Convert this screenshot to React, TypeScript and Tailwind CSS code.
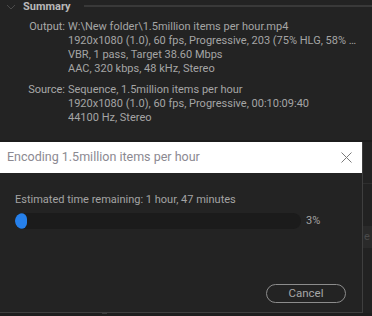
const font = { fontFamily: 'Roboto, "Noto Sans", sans-serif' };

const SummaryRow: React.FC<{ label: string; lines: string[] }> = ({ label, lines }) => {
  return (
    <div className="flex">
      <div className="w-[65px] shrink-0 text-right text-[#a9a9a9]">{label}</div>
      <div className="min-w-0 flex-1 pl-[3px] text-[#a5a5a5]">
        {lines.map((l) => (
          <div key={l} className="truncate">{l}</div>
        ))}
      </div>
    </div>
  );
};

const App: React.FC = () => {
  return (
    <div style={font} className="w-[372px] h-[316px] bg-[#1e1e1e] overflow-hidden flex flex-col">
      {/* summary panel */}
      <section className="h-[140px] shrink-0 bg-[#232323] pr-[12px] text-[11px] leading-[14px]">
        <div className="flex items-center h-[14px]">
          <svg width="10" height="6" viewBox="0 0 10 6" className="ml-[6px] mr-[7px]">
            <path d="M1 1 L5 5 L9 1" fill="none" stroke="#4a4a4a" strokeWidth="1" />
          </svg>
          <span className="font-bold text-[#b9b9b9] text-[11px]">Summary</span>
          <div className="flex-1 h-[2px] bg-[#393939] ml-[13px] -mt-[2px] -mr-[12px]" />
        </div>
        <div className="mt-[6px] flex flex-col gap-[7px]">
          <SummaryRow
            label="Output:"
            lines={[
              "W:\\New folder\\1.5million items per hour.mp4",
              "1920x1080 (1.0), 60 fps, Progressive, 203 (75% HLG, 58% PQ)",
              "VBR, 1 pass, Target 38.60 Mbps",
              "AAC, 320 kbps, 48 kHz, Stereo",
            ]}
          />
          <SummaryRow
            label="Source:"
            lines={[
              "Sequence, 1.5million items per hour",
              "1920x1080 (1.0), 60 fps, Progressive, 00:10:09:40",
              "44100 Hz, Stereo",
            ]}
          />
        </div>
      </section>
      <div className="h-[2px] shrink-0 bg-[#1c1c1c]" />

      <div className="flex flex-1 min-h-0">
        {/* dialog */}
        <div className="w-[363px] shrink-0 flex flex-col border-r border-b border-[#3f3f3f] bg-[#232323]">
          <div className="h-[31px] shrink-0 bg-white flex items-center justify-between pl-[7px] pr-[10px]">
            <span className="text-[12.5px] text-[#8b8991]">Encoding 1.5million items per hour</span>
            <svg width="11" height="11" viewBox="0 0 11 11">
              <path d="M0.5 0.5 L10.5 10.5 M10.5 0.5 L0.5 10.5" stroke="#7a7a7a" strokeWidth="1" />
            </svg>
          </div>
          <div className="flex-1 flex flex-col pl-[15px] pr-[16px] pt-[20px] pb-[9px]">
            <div className="text-[11px] leading-[14px] text-[#a3a3a3]">Estimated time remaining: 1 hour, 47 minutes</div>
            <div className="flex items-center mt-[6px]">
              <div className="w-[286px] h-[16px] rounded-full bg-[#1b1b1b] overflow-hidden">
                <div className="h-full rounded-full bg-[#2680eb]" style={{ width: "12px" }} />
              </div>
              <span className="ml-[5px] text-[11px] text-[#a3a3a3]">3%</span>
            </div>
            <div className="flex-1" />
            <div className="flex justify-end">
              <button
                type="button"
                className="w-[80px] h-[19px] rounded-full border border-[#8c8c8c] text-[11.5px] leading-none text-[#a6a6a6]"
              >
                Cancel
              </button>
            </div>
          </div>
        </div>
        {/* panel behind the dialog */}
        <div className="flex-1 flex flex-col bg-[#222222]">
          <div className="h-[42px] border-b border-[#2e2e2e]" />
          <div className="h-[42px]" />
          <div className="h-[22px] bg-[#2a2a2a] text-[11px] text-[#4a4a4a] leading-[22px] pl-[1px]">e</div>
        </div>
      </div>
      <div className="h-[3px] shrink-0 bg-[#1e1e1e] flex">
        <div className="ml-[102px] w-[5px] h-[1px] bg-[#3a3a3a]" />
      </div>
    </div>
  );
};

export default App;
